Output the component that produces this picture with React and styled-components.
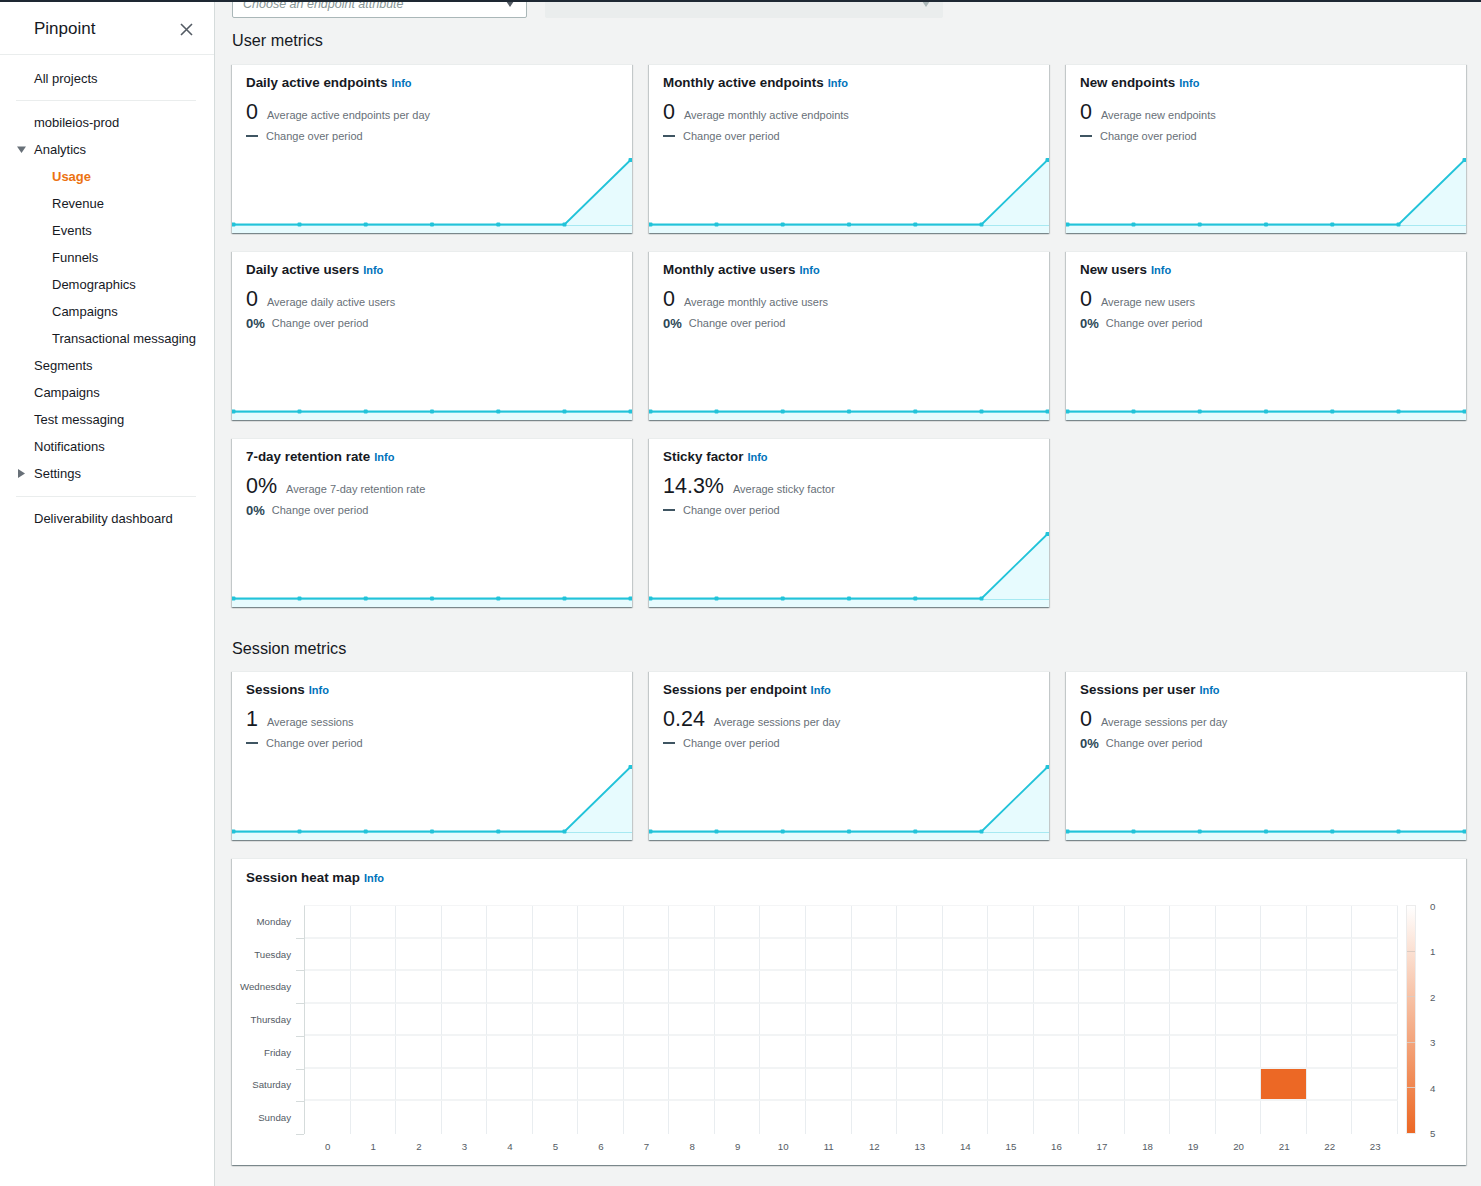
import React from 'react';
import styled, { createGlobalStyle } from 'styled-components';

const GlobalStyle = createGlobalStyle`
  html, body { margin: 0; padding: 0; }
  body {
    font-family: "Liberation Sans", Arial, sans-serif;
    color: #16191f;
    background: #f2f3f3;
    overflow: hidden;
  }
  * { box-sizing: border-box; }
`;

const Page = styled.div`
  min-height: 1186px;
  display: flex;
  flex-direction: column;
`;

const TopStrip = styled.div`
  height: 2px;
  flex: none;
  background: #1e2833;
`;

const Body = styled.div`
  display: flex;
  flex: 1;
`;

/* ---------- Sidebar ---------- */
const Sidebar = styled.nav`
  width: 215px;
  flex: none;
  background: #fff;
  border-right: 1px solid #d5dbdb;
`;

const SideHeader = styled.div`
  height: 53px;
  border-bottom: 1px solid #eaeded;
  display: flex;
  align-items: center;
  justify-content: space-between;
  padding: 2px 21px 0 34px;
`;

const SideTitle = styled.div`
  font-size: 17px;
  color: #16191f;
`;

const CloseIcon = styled.svg`
  width: 13px;
  height: 13px;
  display: block;
`;

const NavList = styled.div`
  padding-top: 10px;
`;

const NavItem = styled.div`
  height: 27px;
  line-height: 27px;
  font-size: 13px;
  display: flex;
  align-items: center;
  padding-left: ${p => (p.$sub ? 52 : 17)}px;
  color: ${p => (p.$active ? '#ec7211' : '#16191f')};
  font-weight: ${p => (p.$active ? 700 : 400)};
  white-space: nowrap;
`;

const CaretSlot = styled.span`
  width: 17px;
  flex: none;
  display: flex;
  align-items: center;
`;

const Tri = styled.svg`
  display: block;
  width: 9px;
  height: 9px;
`;

const Divider = styled.div`
  margin: ${p => p.$m || '8px 18px 8px 16px'};
  border-top: 1px solid #eaeded;
`;

/* ---------- Main ---------- */
const Main = styled.main`
  flex: 1;
  min-width: 0;
  padding: 0 15px 20px 17px;
  overflow: hidden;
`;

const Filters = styled.div`
  display: flex;
  gap: 18px;
  margin-top: -13px;
`;

const Select = styled.div`
  width: ${p => p.$w}px;
  height: 29px;
  border: 1px solid ${p => (p.$disabled ? '#eaeded' : '#aab7b8')};
  background: ${p => (p.$disabled ? '#eaeded' : '#fff')};
  border-radius: 2px;
  display: flex;
  align-items: center;
  justify-content: space-between;
  padding: 0 12px 0 10px;
  font-size: 12.5px;
  font-style: italic;
  color: #879596;
`;

const SelectCaret = styled.span`
  width: 0;
  height: 0;
  border-left: 4px solid transparent;
  border-right: 4px solid transparent;
  border-top: 6px solid ${p => (p.$disabled ? '#aab7b8' : '#545b64')};
`;

const SectionHeading = styled.h2`
  font-size: 16.2px;
  font-weight: 400;
  line-height: 22px;
  margin: ${p => p.$m};
  color: #16191f;
`;

const CardGrid = styled.div`
  display: grid;
  grid-template-columns: repeat(3, 1fr);
  column-gap: 17px;
  row-gap: 18px;
`;

const Card = styled.section`
  background: #fff;
  border-top: 1px solid #eaeded;
  box-shadow: 0 1px 1px 0 rgba(0, 28, 36, 0.3), 1px 1px 1px 0 rgba(0, 28, 36, 0.15),
    -1px 1px 1px 0 rgba(0, 28, 36, 0.15);
`;

const MetricCard = styled(Card)`
  height: 169px;
  display: flex;
  flex-direction: column;
`;

const CardHeader = styled.div`
  padding: 9px 14px 0;
`;

const CardTitle = styled.div`
  font-size: 13.4px;
  font-weight: 700;
  line-height: 18px;
  color: #16191f;
  white-space: nowrap;
`;

const Info = styled.span`
  font-size: 11px;
  font-weight: 700;
  color: #0073bb;
  margin-left: 4px;
`;

const ValueRow = styled.div`
  display: flex;
  align-items: baseline;
  margin-top: 7px;
  height: 26px;
`;

const Value = styled.span`
  font-size: 21.5px;
  line-height: 26px;
  margin-right: 9px;
  color: #16191f;
`;

const SubLabel = styled.span`
  font-size: 11px;
  color: #687078;
`;

const ChangeRow = styled.div`
  display: flex;
  align-items: center;
  height: 18px;
  margin-top: 2px;
`;

const Dash = styled.span`
  width: 12px;
  height: 2px;
  background: #3f5562;
  margin-right: 8px;
`;

const ChangePct = styled.span`
  font-size: 13px;
  font-weight: 700;
  color: #2b4655;
  margin-right: 7px;
`;

const ChartSvg = styled.svg`
  display: block;
  margin-top: auto;
  width: 100%;
  height: 78px;
`;

/* ---------- Heat map ---------- */
const HeatCard = styled(Card)`
  margin-top: 18px;
  padding: 10px 0 5px;
`;

const HeatTitleRow = styled.div`
  padding: 0 14px;
`;

const HeatGrid = styled.div`
  margin-top: 18px;
  display: grid;
  grid-template-columns: 72px 1fr 18px 50px;
  grid-template-rows: 229px 26px;
`;

const DayAxis = styled.div`
  grid-column: 1;
  grid-row: 1;
  display: grid;
  grid-template-rows: repeat(7, 1fr);
`;

const DayLabel = styled.div`
  position: relative;
  display: flex;
  align-items: center;
  justify-content: flex-end;
  padding-right: 13px;
  font-size: 9.7px;
  color: #545b64;
  &::after {
    content: '';
    position: absolute;
    right: 0;
    bottom: -1px;
    width: 8px;
    height: 1px;
    background: #d5dbdb;
  }
`;

const Plot = styled.div`
  grid-column: 2;
  grid-row: 1;
  display: grid;
  grid-template-columns: repeat(24, 1fr);
  grid-template-rows: repeat(7, 1fr);
  border-left: 1px solid #d5dbdb;
  border-top: 1px solid #f4f5f6;
`;

const Cell = styled.div`
  border-right: 1px solid #e9edf0;
  border-bottom: ${p => (p.$last ? 'none' : '2px solid #f2f4f5')};
  background: ${p => (p.$hot ? '#ec6825' : 'transparent')};
`;

const XAxis = styled.div`
  grid-column: 2;
  grid-row: 2;
  display: grid;
  grid-template-columns: repeat(24, 1fr);
  padding-left: 1px;
`;

const XLabel = styled.div`
  text-align: center;
  line-height: 26px;
  font-size: 9.7px;
  color: #545b64;
`;

const LegendBar = styled.div`
  grid-column: 3;
  grid-row: 1;
  justify-self: end;
  width: 10px;
  display: flex;
  flex-direction: column;
  border: 1px solid #ececec;
`;

const LegendSeg = styled.div`
  flex: 1;
  background: linear-gradient(${p => p.$from}, ${p => p.$to});
  border-top: ${p => (p.$first ? 'none' : '1px solid #dccbc1')};
`;

const LegendLabels = styled.div`
  grid-column: 4;
  grid-row: 1;
  display: flex;
  flex-direction: column;
  justify-content: space-between;
  margin: -4px 0 -6px;
  padding-left: 14px;
  font-size: 9.7px;
  line-height: 12px;
  color: #545b64;
`;

/* ---------- Components ---------- */
const LINE = '#22c3d9';
const FILL = '#e7fbfe';

function Chart({ peak }) {
  const xs = [1.5, 67.5, 133.7, 200, 266.3, 332.5, 398.5];
  const base = 69.5;
  const pts = xs.map((x, i) => [x, peak && i === 6 ? 5 : base]);
  const line = pts.map(p => p.join(',')).join(' ');
  const area = `0,${base} ${line} 400,${pts[6][1]} 400,78 0,78`;
  return (
    <ChartSvg viewBox="0 0 400 78" preserveAspectRatio="none">
      <polygon points={area} fill={FILL} />
      <line x1="0" x2="400" y1={base + 1} y2={base + 1} stroke="#a6e9f2" strokeWidth="1" />
      <polyline points={line} fill="none" stroke={LINE} strokeWidth="1.8" />
      {pts.map(([x, y], i) => (
        <rect key={i} x={x - 2} y={y - 2} width="4" height="4" rx="1" fill={LINE} />
      ))}
    </ChartSvg>
  );
}

function Metric({ title, value, label, pct, peak }) {
  return (
    <MetricCard>
      <CardHeader>
        <CardTitle>
          {title}
          <Info>Info</Info>
        </CardTitle>
        <ValueRow>
          <Value>{value}</Value>
          <SubLabel>{label}</SubLabel>
        </ValueRow>
        <ChangeRow>
          {pct ? <ChangePct>{pct}</ChangePct> : <Dash />}
          <SubLabel>Change over period</SubLabel>
        </ChangeRow>
      </CardHeader>
      <Chart peak={peak} />
    </MetricCard>
  );
}

const userMetrics = [
  { title: 'Daily active endpoints', value: '0', label: 'Average active endpoints per day', peak: true },
  { title: 'Monthly active endpoints', value: '0', label: 'Average monthly active endpoints', peak: true },
  { title: 'New endpoints', value: '0', label: 'Average new endpoints', peak: true },
  { title: 'Daily active users', value: '0', label: 'Average daily active users', pct: '0%' },
  { title: 'Monthly active users', value: '0', label: 'Average monthly active users', pct: '0%' },
  { title: 'New users', value: '0', label: 'Average new users', pct: '0%' },
  { title: '7-day retention rate', value: '0%', label: 'Average 7-day retention rate', pct: '0%' },
  { title: 'Sticky factor', value: '14.3%', label: 'Average sticky factor', peak: true },
];

const sessionMetrics = [
  { title: 'Sessions', value: '1', label: 'Average sessions', peak: true },
  { title: 'Sessions per endpoint', value: '0.24', label: 'Average sessions per day', peak: true },
  { title: 'Sessions per user', value: '0', label: 'Average sessions per day', pct: '0%' },
];

const days = ['Monday', 'Tuesday', 'Wednesday', 'Thursday', 'Friday', 'Saturday', 'Sunday'];
const hours = Array.from({ length: 24 }, (_, i) => i);
const legendColors = ['#ffffff', '#fbe0d2', '#f7c2a6', '#f3a47b', '#f0864f', '#ec6825'];

const TriDown = () => (
  <Tri viewBox="0 0 9 9">
    <polygon points="0,1.5 9,1.5 4.5,8" fill="#687078" />
  </Tri>
);
const TriRight = () => (
  <Tri viewBox="0 0 9 9">
    <polygon points="1,0 8,4.5 1,9" fill="#687078" />
  </Tri>
);

export default function App() {
  return (
    <>
      <GlobalStyle />
      <Page>
        <TopStrip />
        <Body>
          <Sidebar>
            <SideHeader>
              <SideTitle>Pinpoint</SideTitle>
              <CloseIcon viewBox="0 0 13 13">
                <path d="M1 1 L12 12 M12 1 L1 12" stroke="#545b64" strokeWidth="1.6" fill="none" />
              </CloseIcon>
            </SideHeader>
            <NavList>
              <NavItem><CaretSlot />All projects</NavItem>
              <Divider />
              <NavItem><CaretSlot />mobileios-prod</NavItem>
              <NavItem><CaretSlot><TriDown /></CaretSlot>Analytics</NavItem>
              <NavItem $sub $active>Usage</NavItem>
              <NavItem $sub>Revenue</NavItem>
              <NavItem $sub>Events</NavItem>
              <NavItem $sub>Funnels</NavItem>
              <NavItem $sub>Demographics</NavItem>
              <NavItem $sub>Campaigns</NavItem>
              <NavItem $sub>Transactional messaging</NavItem>
              <NavItem><CaretSlot />Segments</NavItem>
              <NavItem><CaretSlot />Campaigns</NavItem>
              <NavItem><CaretSlot />Test messaging</NavItem>
              <NavItem><CaretSlot />Notifications</NavItem>
              <NavItem><CaretSlot><TriRight /></CaretSlot>Settings</NavItem>
              <Divider $m="9px 18px 8px 16px" />
              <NavItem><CaretSlot />Deliverability dashboard</NavItem>
            </NavList>
          </Sidebar>

          <Main>
            <Filters>
              <Select $w={295}>
                <span>Choose an endpoint attribute</span>
                <SelectCaret />
              </Select>
              <Select $w={398} $disabled>
                <span />
                <SelectCaret $disabled />
              </Select>
            </Filters>

            <SectionHeading $m="11px 0 13px">User metrics</SectionHeading>
            <CardGrid>
              {userMetrics.map(m => (
                <Metric key={m.title} {...m} />
              ))}
            </CardGrid>

            <SectionHeading $m="30px 0 12px">Session metrics</SectionHeading>
            <CardGrid>
              {sessionMetrics.map(m => (
                <Metric key={m.title} {...m} />
              ))}
            </CardGrid>

            <HeatCard>
              <HeatTitleRow>
                <CardTitle>
                  Session heat map
                  <Info>Info</Info>
                </CardTitle>
              </HeatTitleRow>
              <HeatGrid>
                <DayAxis>
                  {days.map(d => (
                    <DayLabel key={d}>{d}</DayLabel>
                  ))}
                </DayAxis>
                <Plot>
                  {days.map((d, r) =>
                    hours.map(h => (
                      <Cell key={d + h} $last={r === 6} $hot={r === 5 && h === 21} />
                    ))
                  )}
                </Plot>
                <XAxis>
                  {hours.map(h => (
                    <XLabel key={h}>{h}</XLabel>
                  ))}
                </XAxis>
                <LegendBar>
                  {legendColors.slice(0, 5).map((c, i) => (
                    <LegendSeg key={i} $first={i === 0} $from={c} $to={legendColors[i + 1]} />
                  ))}
                </LegendBar>
                <LegendLabels>
                  {[0, 1, 2, 3, 4, 5].map(n => (
                    <span key={n}>{n}</span>
                  ))}
                </LegendLabels>
              </HeatGrid>
            </HeatCard>
          </Main>
        </Body>
      </Page>
    </>
  );
}
